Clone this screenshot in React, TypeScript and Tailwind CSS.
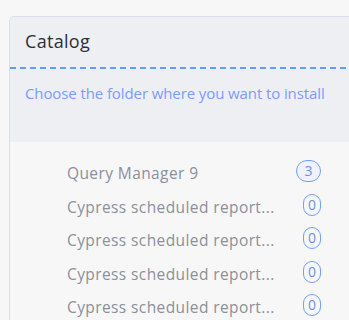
const folders = [
  { name: 'Query Manager 9', count: 3, active: true },
  { name: 'Cypress scheduled report...', count: 0, active: false },
  { name: 'Cypress scheduled report...', count: 0, active: false },
  { name: 'Cypress scheduled report...', count: 0, active: false },
  { name: 'Cypress scheduled report...', count: 0, active: false },
]

function FolderRow({ name, count, active }: { name: string; count: number; active: boolean }) {
  return (
    <div className="h-[33.5px] flex items-center pl-[57px] pr-[48px]">
      <span className="flex-1 text-[15.5px] tracking-[0.4px] text-[#8b9099] leading-none whitespace-nowrap">{name}</span>
      <span
        className={`h-[22px] -mt-[5px] flex items-center justify-center rounded-full border border-[#6fa0ff] text-[14px] text-[#6f8fe6] leading-none ${
          active ? 'w-[25px] bg-[#eef3ff]' : 'w-[18px]'
        }`}
      >
        {count}
      </span>
    </div>
  )
}

export default function App() {
  return (
    <div
      className="h-[320px] bg-[#f7f7f7] pt-4 pl-[9px] overflow-hidden"
      style={{ fontFamily: '"Open Sans", "Liberation Sans", sans-serif' }}
    >
      <div className="w-[360px] h-full rounded-tl-[5px] border-l border-t border-[#dcdde6] overflow-hidden">
        <div className="bg-[#eeeff2]">
          <div className="h-[50px] flex items-center px-[15px] pb-[1px]">
            <h2 className="text-[18px] tracking-[0.3px] text-[#2b2f3a]">Catalog</h2>
          </div>
          <div className="h-[2px] bg-[linear-gradient(to_right,#5c9dff_6px,transparent_6px)] bg-[length:10px_2px]" />
          <div className="h-[73px] px-[15px] pt-[13px]">
            <p className="text-[15px] tracking-[-0.1px] text-[#7b9cff] whitespace-nowrap">Choose the folder where you want to install</p>
          </div>
        </div>
        <div className="bg-[#f7f7f8] pt-[15px] h-full">
          {folders.map((f, i) => (
            <FolderRow key={i} {...f} />
          ))}
        </div>
      </div>
    </div>
  )
}
